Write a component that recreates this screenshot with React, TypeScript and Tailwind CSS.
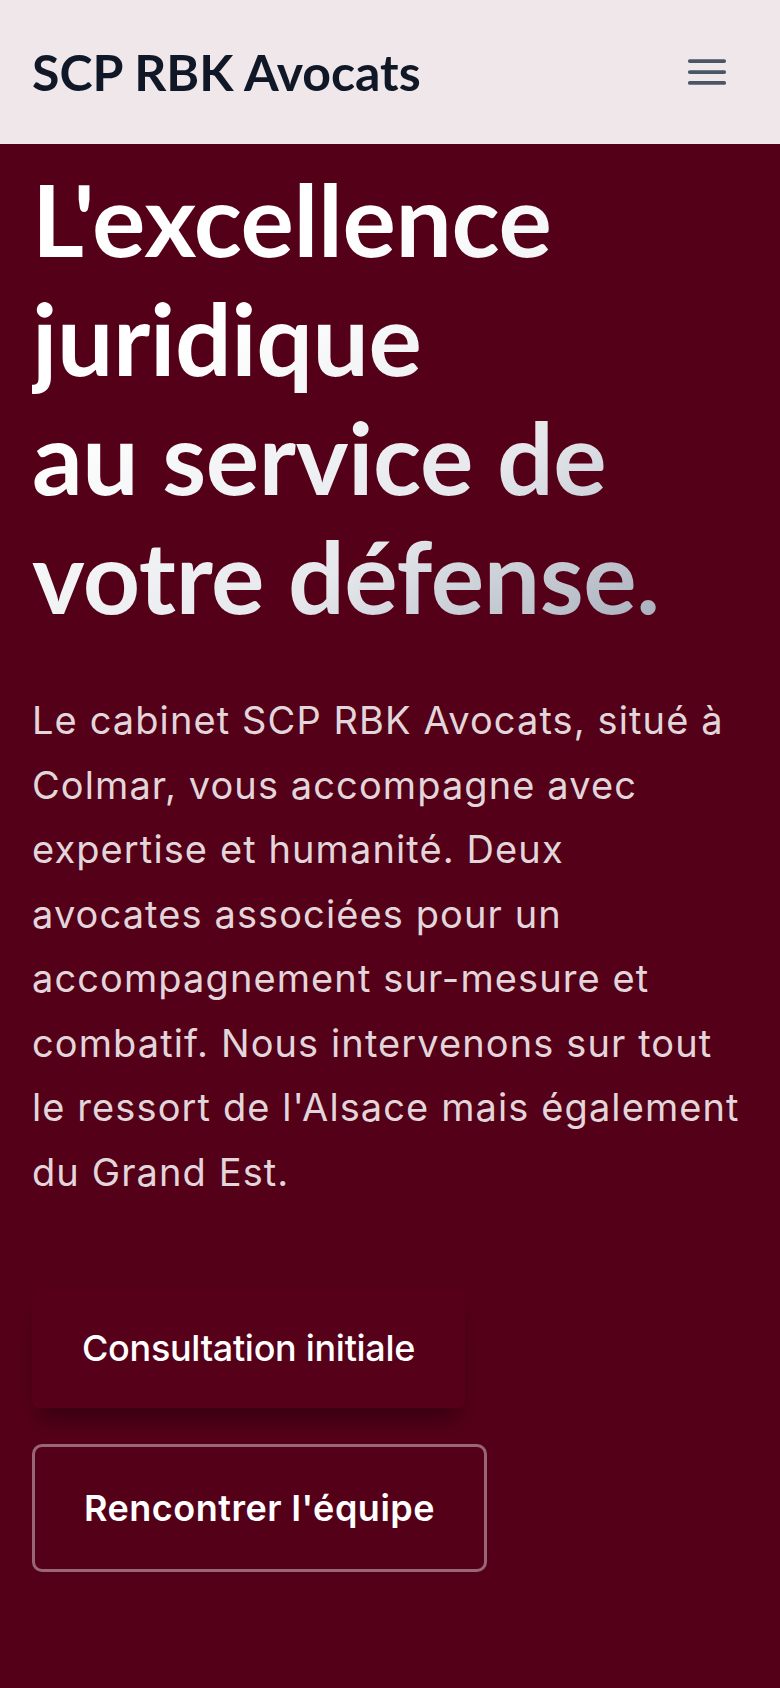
export default function App() {
  return (
    <div className="min-h-[1688px] flex flex-col bg-[#550019]">
      <header className="h-[144px] shrink-0 bg-[#f0e7ea] flex items-center justify-between pl-8 pr-[44px]">
        <span className="text-[50px] font-bold leading-none text-gray-900 [font-family:Lato,sans-serif]">
          SCP RBK Avocats
        </span>
        <button className="p-1 text-gray-600" aria-label="Menu">
          <svg width="50" height="50" viewBox="0 0 24 24" fill="none" stroke="currentColor" strokeWidth="1.8" strokeLinecap="round">
            <path d="M3.75 6.75h16.5M3.75 12h16.5M3.75 17.25h16.5" />
          </svg>
        </button>
      </header>

      <main className="flex-1 px-8 pt-[15px]">
        <h1 className="text-[100px] font-bold leading-[119px] tracking-[-0.4px] [font-family:Lato,sans-serif] bg-linear-to-br from-white from-30% via-gray-200 via-65% to-gray-400 bg-clip-text text-transparent">
          L'excellence juridique
          <br />
          au service de votre défense.
        </h1>

        <p className="mt-[53px] max-w-[710px] text-[38px] leading-[64.5px] tracking-[1.1px] text-[#e2d6db] [font-family:Inter,sans-serif]">
          Le cabinet SCP RBK Avocats, situé à Colmar, vous accompagne avec expertise et humanité. Deux
          avocates associées pour un accompagnement sur-mesure et combatif. Nous intervenons sur tout le
          ressort de l'Alsace mais également du Grand Est.
        </p>

        <div className="mt-[84px] flex flex-col items-start gap-[36px] [font-family:Inter,sans-serif]">
          <button className="px-[50px] py-[40px] text-[36px] leading-[40px] font-medium tracking-[-0.3px] text-white bg-[#56001a] rounded-lg shadow-[0_18px_24px_-6px_rgba(0,0,0,0.35)]">
            Consultation initiale
          </button>
          <button className="px-[49px] py-[41px] text-[36px] leading-[40px] font-semibold tracking-[0.5px] text-white border-[3px] border-white/40 rounded-[10px]">
            Rencontrer l'équipe
          </button>
        </div>
      </main>
    </div>
  );
}
